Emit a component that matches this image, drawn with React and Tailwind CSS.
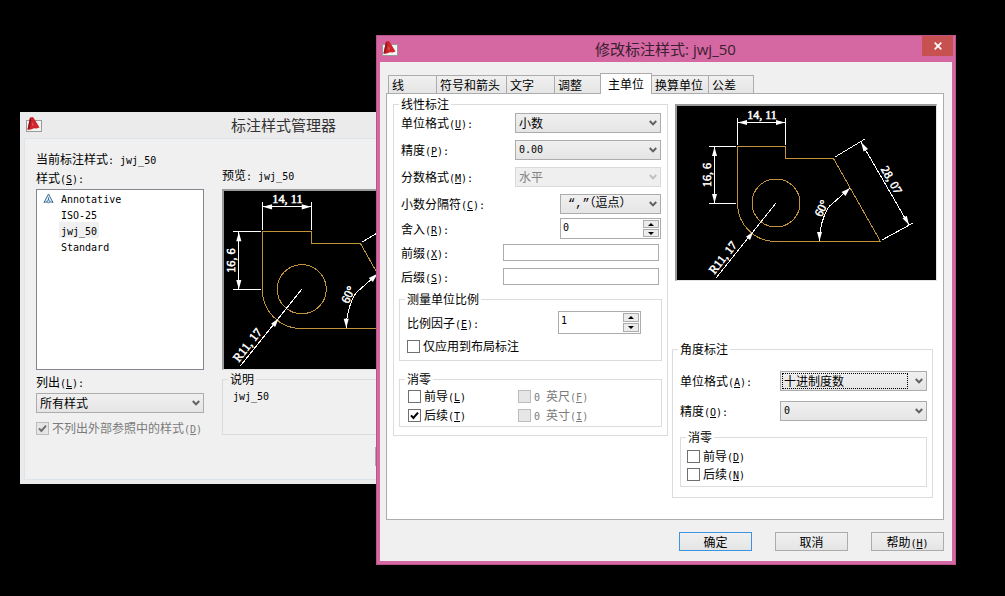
import React from 'react';
import clsx from 'clsx';

// Latin runs are set in a half-width face next to the full-width characters
const Latin = ({ children }) => (
  <span className="whitespace-pre font-['DejaVu_Sans_Mono',monospace] text-[10px] leading-none">{children}</span>
);

const Key = ({ k, colon = false }) => (
  <Latin>
    (<u className="underline-offset-1">{k}</u>){colon && ':'}
  </Latin>
);

const AppIcon = () => (
  <svg className="h-4 w-[17px] shrink-0" viewBox="0 0 17 16" aria-hidden="true">
    <rect x="0.5" y="3.5" width="15" height="11" fill="#f4f4f4" stroke="#9a9a9a" />
    <path d="M4 0.5 L7 0 L9 3 L13.5 10.5 L10.5 11.5 L8 11.2 L5 12.5 L1.5 12.5 Z" fill="#cf252c" />
    <path d="M4 0.5 L5.5 3 L3.5 12.5 L1.5 12.5 Z" fill="#98161d" />
    <path d="M6.5 5 L8 8 L6 9 Z" fill="#e25a5e" />
  </svg>
);

const Chevron = () => (
  <svg className="h-2 w-2" viewBox="0 0 8 8" aria-hidden="true">
    <path d="M0.8 2 L4 5.4 L7.2 2" fill="none" stroke="currentColor" strokeWidth="2" />
  </svg>
);

const Select = ({ id, value, font, disabled = false, focused = false, className }) => (
  <div className={clsx('relative h-5', className)}>
    <select
      id={id}
      disabled={disabled}
      className={clsx(
        'block h-full w-full appearance-none border pl-[3px] pr-4 leading-4 outline-none',
        font,
        disabled
          ? 'border-[#d9d9d9] bg-[#efefef] text-[#838383] opacity-100'
          : 'border-[#acacac] bg-linear-to-b from-[#f0f0f0] to-[#e5e5e5] text-black'
      )}
    >
      <option>{value}</option>
    </select>
    {focused && (
      <span className="pointer-events-none absolute inset-y-[2px] left-[2px] right-[19px] border border-dotted border-black" />
    )}
    <span
      className={clsx(
        'pointer-events-none absolute right-1 top-1.5',
        disabled ? 'text-[#bfbfbf]' : 'text-[#606060]'
      )}
    >
      <Chevron />
    </span>
  </div>
);

const Spinner = ({ id, value, className }) => (
  <div className={clsx('flex border border-[#acacac] bg-white p-px', className)}>
    <input
      id={id}
      type="text"
      defaultValue={value}
      className="min-w-0 flex-1 self-start pl-px font-['DejaVu_Sans_Mono',monospace] text-[10px] leading-4 outline-none"
    />
    <div className="flex w-4 flex-col gap-px">
      {['M0 3 L3 0 L6 3 Z', 'M0 0 L3 3 L6 0 Z'].map((d, i) => (
        <button
          key={d}
          type="button"
          aria-label={i === 0 ? '+' : '-'}
          className="flex flex-1 items-center justify-center border border-[#acacac] bg-[#ececec]"
        >
          <svg className="h-[3px] w-1.5" viewBox="0 0 6 3" aria-hidden="true">
            <path d={d} fill="#000" />
          </svg>
        </button>
      ))}
    </div>
  </div>
);

const Check = ({ children, checked = false, disabled = false }) => (
  <label className={clsx('flex items-center gap-[3px] whitespace-nowrap', disabled && 'text-[#7a7a7a]')}>
    <span className="relative block size-[13px] shrink-0">
      <input
        type="checkbox"
        defaultChecked={checked}
        disabled={disabled}
        className={clsx(
          'peer block size-full appearance-none border',
          disabled ? 'border-[#bcbcbc] bg-[#e6e6e6]' : 'border-[#707070] bg-white'
        )}
      />
      <svg
        className="pointer-events-none absolute inset-0 hidden size-full peer-checked:block"
        viewBox="0 0 13 13"
        aria-hidden="true"
      >
        <path d="M3 6.3 L5.4 9 L10 3.6" fill="none" stroke={disabled ? '#707070' : '#000'} strokeWidth="2" />
      </svg>
    </span>
    <span>{children}</span>
  </label>
);

const Group = ({ title, className, children }) => (
  <fieldset className={clsx('min-w-0 border border-[#dcdcdc] px-[5px]', className)}>
    <legend className="px-[2px] leading-4">{title}</legend>
    {children}
  </fieldset>
);

const Row = ({ id, label, k, children, className }) => (
  <div className={clsx('flex items-center justify-between', className)}>
    <label htmlFor={id} className="whitespace-nowrap">
      {label}
      <Key k={k} colon />
    </label>
    {children}
  </div>
);

// Sample part with its dimensions
const Drawing = ({ className, viewBox }) => (
  <svg className={className} viewBox={viewBox} preserveAspectRatio="xMinYMin meet" aria-hidden="true">
    <g fill="none" stroke="#c1943c" shapeRendering="crispEdges">
      <path d="M59.5 39.5 H107.5 V51.5 H155.5 L202.5 134.5 H97.5 A38 38 0 0 1 59.5 96.5 Z" />
      <circle cx="98" cy="96" r="24" />
    </g>
    <g fill="none" stroke="#fff" shapeRendering="crispEdges">
      <path d="M59.5 11 V38 M107.5 11 V38 M59.5 15.5 H107.5" />
      <path d="M31 39.5 H58 M31 96.5 H58 M36.5 39.5 V96.5" />
      <path d="M98 96 L38 171" />
      <path d="M157 50 L187 32 M204 133 L235 116 M183 35 L231 118" />
      <path d="M141.5 134 C141.5 116 149 100 154 97 L172 81" />
    </g>
    <g fill="#fff">
      <path d="M60 15.5 L69 13 V18 Z M107 15.5 L98 13 V18 Z" />
      <path d="M36.5 40 L34 49 H39 Z M36.5 96 L34 87 H39 Z" />
      <path d="M75.5 124.5 L72 133 L68 129.8 Z" />
      <path d="M183 35 L185.5 44.5 L190 42 Z M231 118 L228.8 108.8 L224.5 111.2 Z" />
      <path d="M141.5 134 L139 125 H144 Z M172 81 L167.5 89 L163.5 85 Z" />
    </g>
    <g
      className="font-['Liberation_Serif',serif] text-[12px]"
      fill="#fff"
      stroke="#fff"
      strokeWidth="0.5"
      textAnchor="middle"
    >
      <text x="84" y="12">14, 11</text>
      <text transform="translate(33 68) rotate(-90)">16, 6</text>
      <text transform="translate(48 153) rotate(-52)">R11, 17</text>
      <text transform="translate(147 103) rotate(-65)">60°</text>
      <text transform="translate(210 75) rotate(60)">28, 07</text>
    </g>
  </svg>
);

const Preview = ({ className, children }) => (
  <div className={clsx('overflow-hidden border-b border-l-2 border-r border-t-2 border-[#9a9a9a] border-b-[#e3e3e3] border-r-[#e3e3e3] bg-black', className)}>
    {children}
  </div>
);

const styles = ['Annotative', 'ISO-25', 'jwj_50', 'Standard'];

const StyleManager = () => (
  <section className="absolute left-5 top-28 w-[528px] bg-[#ebebeb] px-1 pb-1">
    <header className="flex h-[26px] items-center pl-[2px]">
      <AppIcon />
      <h2 className="flex-1 pr-5 text-center font-['Open_Sans','Noto_Sans_CJK_SC',sans-serif] text-[15px] leading-5 text-[#333]">
        标注样式管理器
      </h2>
    </header>
    <div className="border border-[#dde5ec] bg-[#f0f0f0] pb-[13px] pl-[11px] pr-3 pt-3">
      <p>
        当前标注样式<Latin>: jwj_50</Latin>
      </p>
      <div className="grid grid-cols-[168px_1fr] gap-x-[18px]">
        <div className="flex flex-col pt-[3px]">
          <span>
            样式
            <Key k="S" colon />
          </span>
          <ul className="mt-[3px] h-[181px] border border-[#828790] bg-white pl-1.5">
            {styles.map((name) => (
              <li key={name} className="flex h-4 items-center">
                <span className="w-4">
                  {name === 'Annotative' && (
                    <svg className="h-[11px] w-[11px]" viewBox="0 0 11 11" aria-hidden="true">
                      <path
                        d="M5.5 1 L10 9.5 L7.5 8.8 L5.5 9.8 L3.5 8.8 L1 9.5 Z M5.5 4.5 V7 L3.5 8.8 M5.5 7 L7.5 8.8"
                        fill="#dcebf5"
                        stroke="#3f6f9c"
                      />
                    </svg>
                  )}
                </span>
                <span className={clsx('px-[2px]', name === 'jwj_50' && 'bg-[#f0f0f0]')}>
                  <Latin>{name}</Latin>
                </span>
              </li>
            ))}
          </ul>
          <label htmlFor="list-filter" className="mt-1">
            列出
            <Key k="L" colon />
          </label>
          <Select id="list-filter" value="所有样式" className="mt-[3px]" />
          <div className="mt-[7px]">
            <Check checked disabled>
              不列出外部参照中的样式
              <Key k="D" />
            </Check>
          </div>
        </div>
        <div className="flex flex-col">
          <p>
            预览<Latin>: jwj_50</Latin>
          </p>
          <Preview className="mt-1.5 h-[181px]">
            <Drawing className="h-[178px] w-[300px]" viewBox="22 0 293 174" />
          </Preview>
          <Group title="说明" className="mt-px h-16">
            <p className="pl-[5px]">
              <Latin>jwj_50</Latin>
            </p>
          </Group>
          <div className="mt-3 flex justify-center">
            <span className="h-[19px] w-1 border border-[#acacac] bg-[#e5e5e5]" />
          </div>
        </div>
      </div>
    </div>
  </section>
);

const tabs = [
  { name: '线', width: 'w-[49px]' },
  { name: '符号和箭头', width: 'w-[71px]' },
  { name: '文字', width: 'w-[49px]' },
  { name: '调整', width: 'w-[47px]' },
  { name: '主单位', width: 'w-[52px]', active: true },
  { name: '换算单位', width: 'w-[58px]' },
  { name: '公差', width: 'w-[46px]' },
];

const numeric = "font-['DejaVu_Sans_Mono',monospace] text-[10px]";

const LinearDimensions = () => (
  <Group title="线性标注" className="w-[275px] self-start pb-2">
    <div className="flex flex-col pl-[2px] pr-px pt-px">
      <div className="flex flex-col gap-[7px]">
        <Row id="unit" label="单位格式" k="U">
          <Select id="unit" value="小数" className="w-[146px]" />
        </Row>
        <Row id="precision" label="精度" k="P">
          <Select id="precision" value="0.00" font={numeric} className="w-[146px]" />
        </Row>
        <Row id="fraction" label="分数格式" k="M">
          <Select id="fraction" value="水平" disabled className="w-[146px]" />
        </Row>
        <Row id="separator" label="小数分隔符" k="C">
          <Select
            id="separator"
            value="“,”（逗点）"
            font="font-['Liberation_Mono','Noto_Sans_CJK_SC',monospace] indent-1"
            className="w-[101px]"
          />
        </Row>
      </div>
      <Row id="round" label="舍入" k="R" className="mt-1">
        <Spinner id="round" value="0" className="h-[21px] w-[101px]" />
      </Row>
      <Row id="prefix" label="前缀" k="X" className="mt-[5px] pr-[2px]">
        <input id="prefix" type="text" className="h-[17px] w-[156px] border border-[#acacac] bg-white px-1 outline-none" />
      </Row>
      <Row id="suffix" label="后缀" k="S" className="mt-[7px] pr-[2px]">
        <input id="suffix" type="text" className="h-[17px] w-[156px] border border-[#acacac] bg-white px-1 outline-none" />
      </Row>
    </div>
    <Group title="测量单位比例" className="mt-1.5 pb-1.5">
      <Row id="scale" label="比例因子" k="E" className="pl-[2px] pr-[15px] pt-1">
        <Spinner id="scale" value="1" className="h-[23px] w-[83px]" />
      </Row>
      <div className="mt-1 pl-[2px]">
        <Check>仅应用到布局标注</Check>
      </div>
    </Group>
    <Group title="消零" className="mt-[10px] pb-[3px]">
      <div className="grid grid-cols-[110px_1fr] gap-y-[3px] pl-[3px] pt-px">
        <Check>
          前导
          <Key k="L" />
        </Check>
        <Check disabled>
          <Latin>0 </Latin>英尺
          <Key k="F" />
        </Check>
        <Check checked>
          后续
          <Key k="T" />
        </Check>
        <Check disabled>
          <Latin>0 </Latin>英寸
          <Key k="I" />
        </Check>
      </div>
    </Group>
  </Group>
);

const AngularDimensions = () => (
  <Group title="角度标注" className="mt-[60px] w-[261px] pb-[10px]">
    <div className="flex flex-col gap-[10px] pl-[2px] pt-[14px]">
      <Row id="angle-unit" label="单位格式" k="A">
        <Select id="angle-unit" value="十进制度数" focused className="w-[147px]" />
      </Row>
      <Row id="angle-precision" label="精度" k="O">
        <Select id="angle-precision" value="0" font={numeric} className="w-[147px]" />
      </Row>
    </div>
    <Group title="消零" className="ml-[2px] mt-2 pb-1">
      <div className="flex flex-col gap-[2px] pl-px pt-[3px]">
        <Check>
          前导
          <Key k="D" />
        </Check>
        <Check>
          后续
          <Key k="N" />
        </Check>
      </div>
    </Group>
  </Group>
);

const buttonClass = 'h-[19px] w-[73px] border bg-linear-to-b from-[#f0f0f0] to-[#e5e5e5] leading-4';

const ModifyStyleDialog = () => (
  <section className="absolute left-[376px] top-[35px] w-[580px] border border-[#b9558b] bg-[#d567a2] px-[3px] pb-[3px]">
    <header className="relative flex h-[26px] items-center pl-[2px]">
      <AppIcon />
      <h1 className="flex-1 pr-5 text-center font-['Open_Sans','Noto_Sans_CJK_SC',sans-serif] text-[15px] leading-5 text-[#3a2030]">
        修改标注样式: jwj_50
      </h1>
      <button
        type="button"
        aria-label="×"
        className="absolute -right-px top-0 flex h-5 w-[31px] items-center justify-center bg-[#c75050]"
      >
        <svg className="size-2" viewBox="0 0 8 8" aria-hidden="true">
          <path d="M0.7 0.7 L7.3 7.3 M7.3 0.7 L0.7 7.3" stroke="#fff" strokeWidth="1.7" />
        </svg>
      </button>
    </header>
    <div className="bg-[#f0f0f0] pb-[10px] pl-1.5 pr-2 pt-[11px]">
      <div role="tablist" className="flex items-end pl-[2px]">
        {tabs.map((tab, i) => (
          <button
            key={tab.name}
            type="button"
            role="tab"
            aria-selected={!!tab.active}
            className={clsx(
              'whitespace-nowrap border border-b-0 border-[#acacac] leading-4',
              tab.width,
              i > 0 && '-ml-px',
              tab.active
                ? 'relative -mb-px h-[21px] bg-white text-center'
                : 'h-[18px] bg-linear-to-b from-[#f0f0f0] to-[#e5e5e5] pl-[3px] text-left'
            )}
          >
            {tab.name}
          </button>
        ))}
      </div>
      <div className="flex gap-1 border border-[#acacac] bg-white pb-[21px] pl-1.5 pt-[2px]">
        <LinearDimensions />
        <div className="min-w-0 flex-1">
          <Preview className="ml-[3px] mt-2 h-[177px] w-[262px]">
            <Drawing className="h-[174px] w-[259px]" viewBox="-1 -1 259 174" />
          </Preview>
          <AngularDimensions />
        </div>
      </div>
      <div className="mt-3 flex justify-end gap-[23px]">
        <button type="button" className={clsx(buttonClass, 'border-[#3c94e0]')}>
          确定
        </button>
        <button type="button" className={clsx(buttonClass, 'border-[#acacac]')}>
          取消
        </button>
        <button type="button" className={clsx(buttonClass, 'border-[#acacac]')}>
          帮助
          <Key k="H" />
        </button>
      </div>
    </div>
  </section>
);

export default function App() {
  return (
    <main className="relative min-h-screen overflow-hidden bg-black font-['Noto_Sans_CJK_SC',sans-serif] text-[12px] leading-4 text-black">
      <StyleManager />
      <ModifyStyleDialog />
    </main>
  );
}
